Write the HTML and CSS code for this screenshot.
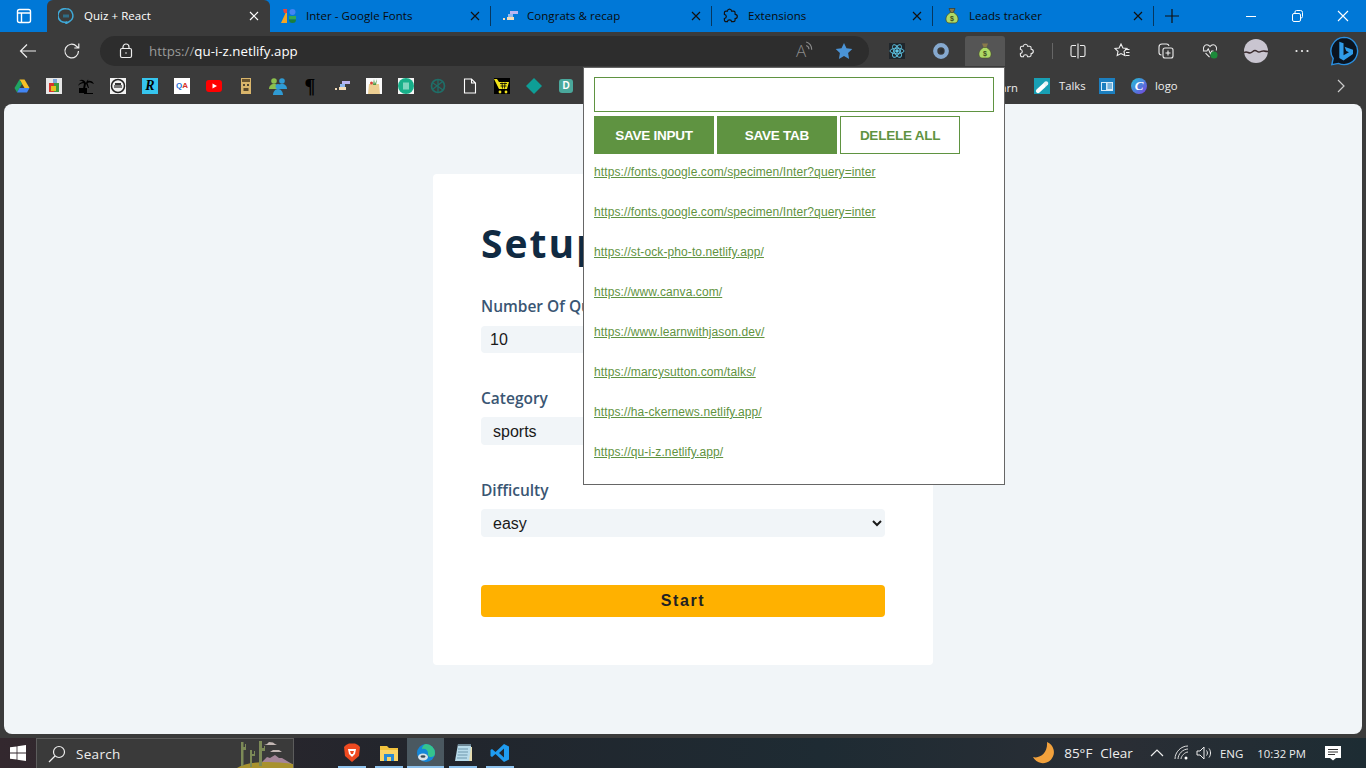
FILE: index.html
```html
<!DOCTYPE html>
<html lang="en">
<head>
<meta charset="utf-8">
<title>Quiz + React</title>
<link rel="stylesheet" href="styles.css">
</head>
<body>
<div class="tabbar">
  <div class="tab-lead">
    <svg class="ic18" viewBox="0 0 18 18" fill="none" stroke="#fff" stroke-width="1.4"><rect x="2.500" y="2.500" width="13" height="13" rx="2"/><path d="M2.500 6h13M6.500 6v9.500" /></svg>
  </div>
  <div class="tab tab-active">
    <svg class="ic16" viewBox="0 0 16 16" fill="none"><path d="M8 .8a6.800 6.800 0 0 1 3.400 12.700c-.8.600-1.800 1.400-3.200 1.900.5-.6.600-1 .5-1.400A6.800 6.800 0 1 1 8 .8z" stroke="#3fa9d8" stroke-width="1.500"/><path d="M5 6.500h6v3H5z" fill="#2f6c86"/></svg>
    <span class="tab-title">Quiz + React</span>
    <svg class="tab-x" viewBox="0 0 10 10" stroke="#fff" stroke-width="1.2"><path d="M1 1l8 8M9 1l-8 8"/></svg>
  </div>
  <div class="tab">
    <svg class="ic16" viewBox="0 0 16 16"><path d="M0 15L6 2v13z" fill="#f5a623"/><path d="M2 1h4v4H3z" fill="#e8453c"/><circle cx="11.500" cy="4" r="3" fill="#4285f4"/><rect x="8" y="8" width="7" height="3.500" fill="#34a853"/><path d="M8 11.500h7a3.500 3.500 0 0 1-7 0z" fill="#1b7f3b"/></svg>
    <span class="tab-title">Inter - Google Fonts</span>
    <svg class="tab-x" viewBox="0 0 10 10" stroke="#111" stroke-width="1.2"><path d="M1 1l8 8M9 1l-8 8"/></svg>
  </div>
  <div class="tab tab-sep">
    <svg class="ic16" viewBox="0 0 16 16"><rect x="8" y="3" width="8" height="3" fill="#b9b4f0"/><rect x="6" y="6" width="5" height="3" fill="#8fb8ee"/><rect x="5" y="9" width="7" height="3" fill="#f3dcb8"/><rect x="1" y="10" width="2" height="2" fill="#f3dcb8"/></svg>
    <span class="tab-title">Congrats &amp; recap</span>
    <svg class="tab-x" viewBox="0 0 10 10" stroke="#111" stroke-width="1.2"><path d="M1 1l8 8M9 1l-8 8"/></svg>
  </div>
  <div class="tab tab-sep">
    <svg class="ic16" viewBox="0 0 16 16" fill="none" stroke="#111" stroke-width="1.2"><path d="M6.500 1.200c1.200 0 2 .9 2.100 2h1.900c.9 0 1.600.7 1.600 1.600v1.500c1.200.1 2.200.9 2.200 2.100s-1 2-2.200 2.100v1.600c0 .9-.7 1.600-1.600 1.600H8.600c-.1-1.100-1-1.900-2.100-1.900s-2 .8-2.100 1.900H3c-.9 0-1.600-.7-1.600-1.600v-1.600c1.100-.3 1.900-1.100 1.900-2.100s-.8-1.800-1.900-2.100V4.800c0-.9.700-1.600 1.600-1.600h1.400c.1-1.100.9-2 2.100-2z"/></svg>
    <span class="tab-title">Extensions</span>
    <svg class="tab-x" viewBox="0 0 10 10" stroke="#111" stroke-width="1.2"><path d="M1 1l8 8M9 1l-8 8"/></svg>
  </div>
  <div class="tab tab-sep">
    <svg class="ic16" viewBox="0 0 16 16"><path d="M5 .5h6L9.300 4.500H6.700z" fill="#8a7a4a" stroke="#3c3a20" stroke-width=".7"/><path d="M6.500 4.500h3c3 1.500 5 4.500 4.500 7.500-.3 1.700-1.500 3-3 3H5c-1.500 0-2.700-1.300-3-3-.5-3 1.500-6 4.500-7.500z" fill="#aedb66" stroke="#4a5228" stroke-width=".8"/><text class="bag-sign" x="8" y="12.500">$</text></svg>
    <span class="tab-title">Leads tracker</span>
    <svg class="tab-x" viewBox="0 0 10 10" stroke="#111" stroke-width="1.2"><path d="M1 1l8 8M9 1l-8 8"/></svg>
  </div>
  <div class="tab-new tab-sep">
    <svg class="ic16" viewBox="0 0 16 16" stroke="#111" stroke-width="1.200"><path d="M8 1v14M1 8h14"/></svg>
  </div>
  <div class="win-controls">
    <svg class="win-btn" viewBox="0 0 46 32" stroke="#fff" stroke-width="1" fill="none"><path d="M18 16.500h10"/></svg>
    <svg class="win-btn" viewBox="0 0 46 32" stroke="#fff" stroke-width="1" fill="none"><rect x="18.500" y="13.500" width="8" height="8" rx="1.500"/><path d="M21 13v-1a1.500 1.500 0 0 1 1.500-1.500h4a2 2 0 0 1 2 2v4a1.500 1.500 0 0 1-1.500 1.500"/></svg>
    <svg class="win-btn" viewBox="0 0 46 32" stroke="#fff" stroke-width="1.100" fill="none"><path d="M18 11l10 10M28 11L18 21"/></svg>
  </div>
</div>

<div class="toolbar">
  <div class="tb-btn"><svg class="ic18" viewBox="0 0 18 18" fill="none" stroke="#eee" stroke-width="1.200"><path d="M17 9H1.500M8 2.500L1.500 9 8 15.500"/></svg></div>
  <div class="tb-btn"><svg class="ic18" viewBox="0 0 18 18" fill="none" stroke="#eee" stroke-width="1.200"><path d="M15.500 9a6.800 6.800 0 1 1-2-4.800L15.500 6M15.800 1.500V6h-4.500"/></svg></div>
  <div class="address">
    <svg class="lock" viewBox="0 0 14 16" fill="none" stroke="#eee" stroke-width="1.200"><rect x="1.500" y="5.500" width="11" height="9" rx="1.500"/><path d="M4 5.500V4a3 3 0 0 1 6 0v1.500"/><circle cx="7" cy="10" r=".8" fill="#eee" stroke="none"/></svg>
    <span class="url"><span class="url-dim">https://</span>qu-i-z.netlify.app</span>
    <span class="read-aloud">A<svg class="wave" viewBox="0 0 8 10" fill="none" stroke="#8a8a8a" stroke-width="1"><path d="M1 1c3 1 5 3 5 7M1 4c1.500.5 2.500 1.500 2.500 3.500"/></svg></span>
    <svg class="star" viewBox="0 0 18 18" fill="#4a93d6"><path d="M9 1l2.500 5.300 5.800.8-4.200 4 1 5.800L9 14.100l-5.100 2.800 1-5.800-4.200-4 5.800-.8z"/></svg>
  </div>
  <div class="tb-btn tb-first"><svg class="ic16" viewBox="0 0 16 16" fill="none" stroke="#5fc7e8" stroke-width=".9"><rect width="16" height="16" fill="#20262b" stroke="none"/><ellipse cx="8" cy="8" rx="7" ry="2.800"/><ellipse cx="8" cy="8" rx="7" ry="2.800" transform="rotate(60 8 8)"/><ellipse cx="8" cy="8" rx="7" ry="2.800" transform="rotate(120 8 8)"/><circle cx="8" cy="8" r="1.300" fill="#5fc7e8"/></svg></div>
  <div class="tb-btn"><svg class="ic16" viewBox="0 0 16 16" fill="none"><ellipse cx="8" cy="8" rx="5.800" ry="5.800" stroke="#86a9cf" stroke-width="4.200"/><ellipse cx="8.800" cy="8" rx="1.800" ry="2.600" fill="#2c3136"/></svg></div>
  <div class="tb-btn tb-active"><svg class="ic16" viewBox="0 0 16 16"><path d="M5 .5h6L9.300 4.500H6.700z" fill="#8a7a4a"/><path d="M6.500 4.500h3c3 1.500 5 4.500 4.500 7.500-.3 1.700-1.500 3-3 3H5c-1.500 0-2.700-1.300-3-3-.5-3 1.500-6 4.500-7.500z" fill="#aedb66" stroke="#4a5228" stroke-width=".6"/><text class="bag-sign" x="8" y="12.500">$</text></svg></div>
  <div class="tb-btn"><svg class="ic16" viewBox="0 0 16 16" fill="none" stroke="#eee" stroke-width="1.100"><path d="M6.500 1.200c1.200 0 2 .9 2.100 2h1.900c.9 0 1.600.7 1.600 1.600v1.500c1.200.1 2.200.9 2.200 2.100s-1 2-2.200 2.100v1.600c0 .9-.7 1.600-1.600 1.600H8.600c-.1-1.100-1-1.900-2.100-1.900s-2 .8-2.100 1.900H3c-.9 0-1.600-.7-1.600-1.600v-1.600c1.100-.3 1.900-1.100 1.900-2.100s-.8-1.800-1.900-2.100V4.800c0-.9.700-1.600 1.600-1.600h1.400c.1-1.100.9-2 2.100-2z"/></svg></div>
  <div class="tb-divider"></div>
  <div class="tb-btn"><svg class="ic16" viewBox="0 0 16 16" fill="none" stroke="#eee" stroke-width="1.100"><path d="M6 2.500H2.500a1.500 1.500 0 0 0-1.500 1.500v8a1.500 1.500 0 0 0 1.500 1.500H6M10 2.500h3.500A1.500 1.500 0 0 1 15 4v8a1.500 1.500 0 0 1-1.500 1.500H10M8 0.500v15"/></svg></div>
  <div class="tb-btn"><svg class="ic16" viewBox="0 0 16 16" fill="none" stroke="#eee" stroke-width="1.100"><path d="M7 1l1.900 4 4.100.5-3 2.900.8 4.100L7 10.500l-3.800 2 .8-4.100-3-2.900L5.100 5z"/><path d="M11 6.500h4.500M12 9.500h3.500M11.500 12.500h4"/></svg></div>
  <div class="tb-btn"><svg class="ic16" viewBox="0 0 16 16" fill="none" stroke="#eee" stroke-width="1.100"><rect x="5" y="5" width="10" height="10" rx="2"/><path d="M10 7.500v5M7.500 10h5M3.500 12A2.500 2.500 0 0 1 1 9.500V4a3 3 0 0 1 3-3h4.500A2.500 2.500 0 0 1 11 3"/></svg></div>
  <div class="tb-btn"><svg class="ic16" viewBox="0 0 18 18" fill="none" stroke="#eee" stroke-width="1.200"><path d="M2 8.500C.5 5 3 2 5.500 2 7 2 8.300 3 9 4c.7-1 2-2 3.500-2C15 2 17.500 5 16 8.500M1 9h4.500L7 6.500 9.500 12l1.500-3h2M4 11.500l4.500 4.500"/><circle cx="13.500" cy="13.500" r="4" fill="#1c8a3a" stroke="none"/></svg></div>
  <svg class="avatar" viewBox="0 0 24 24"><circle cx="12" cy="12" r="12" fill="#c9c5d0"/><path d="M0 13.500c3-1.500 4 .5 6 .5s3-2.500 5-2.500 2 1.500 4 1.500 3-1.500 5-1 2 .5 4 .5" fill="none" stroke="#3a2b2e" stroke-width="1.500"/></svg>
  <div class="tb-btn"><svg class="ic16" viewBox="0 0 16 16" fill="#eee"><circle cx="2.500" cy="8" r="1.100"/><circle cx="8" cy="8" r="1.100"/><circle cx="13.500" cy="8" r="1.100"/></svg></div>
  <svg class="bing" viewBox="0 0 32 32"><path d="M16 1.500a14.500 14.500 0 1 1-6 27.700L3 30.500l1.500-6.500A14.500 14.500 0 0 1 16 1.500z" fill="#0a1420" stroke="#2a8fe0" stroke-width="1.500"/><path d="M11 6l4.500 1.600v13l5.800-3.300-2.900-1.300-1.800-4.500 9 3.200v4.600L15.500 26 11 23.500z" fill="#2f9be8"/></svg>
</div>

<div class="bookmarks">
  <div class="bm"><svg class="ic16" viewBox="0 0 16 16"><path d="M5.500 1.500h5L15.500 10h-5z" fill="#f6bf26"/><path d="M5.500 1.500L.5 10l2.500 4.500L8 6z" fill="#1fa463"/><path d="M3 14.500h10l2.500-4.500H5.500z" fill="#4285f4"/></svg></div>
  <div class="bm"><svg class="ic16" viewBox="0 0 16 16"><rect width="16" height="16" fill="#e6e6e6"/><rect x="3" y="5" width="5" height="9" fill="#d9342b"/><rect x="8" y="5" width="5" height="9" fill="#3d9b3d"/><rect x="5" y="8" width="5" height="5" fill="#e4c21e"/><rect x="7" y="1" width="4" height="4" fill="#7ea6d9"/></svg></div>
  <div class="bm"><svg class="ic16" viewBox="0 0 16 16" fill="#000"><path d="M8 5C6 1 3 1 1 3c2-.5 3 0 4 1C3 4 1 5 0 8c2-2 4-3 6-2.500L5 11h2l1-5.500L10 10h1L9.500 5C11 4 13 4.500 16 6c-1-3-4-4-6.500-3C11 1.500 10 0 8 5z"/><rect x="1" y="10" width="8" height="5"/><path d="M6 15h9v1H6z"/></svg></div>
  <div class="bm"><svg class="ic16" viewBox="0 0 16 16" fill="none"><rect width="16" height="16" fill="#f2f2f2"/><circle cx="8" cy="8" r="6.500" stroke="#222" stroke-width="1.500"/><path d="M4 7h8v3H4z" fill="#777"/><path d="M5 5h6v2H5z" fill="#333"/></svg></div>
  <div class="bm"><span class="bm-r">R</span></div>
  <div class="bm"><span class="bm-qa"><span class="bm-q">Q</span><span class="bm-a">A</span></span></div>
  <div class="bm"><svg class="ic16" viewBox="0 0 16 16"><rect y="2" width="16" height="12" rx="3" fill="#f00"/><path d="M6.500 5.500L11 8l-4.500 2.500z" fill="#fff"/></svg></div>
  <div class="bm"><svg class="ic16" viewBox="0 0 16 16"><path d="M3 0h10v16H3z" fill="#d9b56b"/><path d="M4 1h8v3H4z" fill="#6b5530"/><circle cx="6" cy="7" r="1" fill="#222"/><circle cx="10" cy="7" r="1" fill="#222"/><path d="M5.500 10h5v3h-5z" fill="#5b4a2c"/></svg></div>
  <div class="bm"><svg class="ic18" viewBox="0 0 18 18"><circle cx="5" cy="4" r="2.800" fill="#8bbf4d"/><circle cx="13" cy="4" r="2.800" fill="#2f9bd4"/><path d="M0 12c0-3 2-5 5-5s5 2 5 5z" fill="#8bbf4d"/><path d="M8 12c0-3 2-5 5-5s5 2 5 5z" fill="#2f9bd4"/><circle cx="9" cy="9.500" r="2.500" fill="#2f9bd4"/><path d="M4 18c0-3 2-6 5-6s5 3 5 6z" fill="#2f9bd4"/></svg></div>
  <div class="bm"><span class="bm-pilcrow">¶</span></div>
  <div class="bm"><svg class="ic16" viewBox="0 0 16 16"><rect x="8" y="3" width="8" height="3" fill="#b9b4f0"/><rect x="6" y="6" width="5" height="3" fill="#8fb8ee"/><rect x="5" y="9" width="7" height="3" fill="#f3dcb8"/><rect x="1" y="10" width="2" height="2" fill="#f3dcb8"/></svg></div>
  <div class="bm"><svg class="ic16" viewBox="0 0 16 16"><rect width="16" height="16" fill="#fafafa"/><path d="M3 6h10l1 10H2z" fill="#edcf93"/><path d="M8 1l1 6H7zM11 1L10 7H8.500z" fill="#4d9a44"/><circle cx="5.500" cy="5" r="1.500" fill="#d6463a"/></svg></div>
  <div class="bm"><svg class="ic16" viewBox="0 0 16 16"><rect width="16" height="16" fill="#f5f5f5"/><circle cx="8" cy="8" r="8" fill="#18b08a"/><rect x="5" y="4.500" width="6" height="7" fill="#7fd6bf"/></svg></div>
  <div class="bm"><svg class="ic16" viewBox="0 0 16 16" fill="none" stroke="#1f6e68" stroke-width="1.700"><circle cx="8" cy="8" r="6.500"/><path d="M3 5l10 7M3 11l9-7M8 2v12" stroke-width="1.300"/></svg></div>
  <div class="bm"><svg class="ic16" viewBox="0 0 14 16" fill="none" stroke="#fff" stroke-width="1.100"><path d="M1.500 1h7l4 4v10h-11zM8.500 1v4h4"/></svg></div>
  <div class="bm"><svg class="ic16" viewBox="0 0 16 16"><rect width="16" height="16" fill="#000"/><path d="M0 1h3l2 3h10l-2 7H5z" fill="#f0e21a"/><path d="M6 5.500h7M6.500 8h6M8 4.500l.5 6M11 4.500l-.5 6" stroke="#000" stroke-width=".8"/><circle cx="6" cy="14" r="1.400" fill="#f0e21a"/><circle cx="12" cy="14" r="1.400" fill="#f0e21a"/></svg></div>
  <div class="bm"><svg class="ic16" viewBox="0 0 16 16"><path d="M8 0l8 8-8 8-8-8z" fill="#0e9e96"/></svg></div>
  <div class="bm"><span class="bm-d">D</span></div>
  <div class="bm-hidden"><span class="bm-label">Learn</span></div>
  <div class="bm-talks"><svg class="ic16" viewBox="0 0 16 16"><rect width="16" height="16" fill="#189fb4"/><path d="M2.500 11.500l6-5.500a2 2 0 0 1 3 3l-6 5.500a2 2 0 0 1-3-3z" fill="#fff"/><path d="M9 5.500l2-2a2.200 2.200 0 0 1 3 3l-2 2z" fill="#e8f4f6"/></svg><span class="bm-label">Talks</span></div>
  <div class="bm"><svg class="ic16" viewBox="0 0 16 16"><rect width="16" height="16" fill="#1c7fbf"/><rect x="2" y="4" width="12" height="9" fill="#d7ebf7"/><rect x="3" y="5" width="4" height="7" fill="#1c7fbf"/><path d="M8.500 6H13M8.500 8H13M8.500 10H13" stroke="#1c7fbf" stroke-width="1"/></svg></div>
  <div class="bm-logo"><span class="canva">C</span><span class="bm-label">logo</span></div>
  <svg class="bm-more" viewBox="0 0 10 14" fill="none" stroke="#ccc" stroke-width="1.200"><path d="M2 1l6 6-6 6"/></svg>
</div>

<div class="stage">
  <main class="card">
    <h1 class="card-title">Setup Quiz</h1>
    <div class="field">
      <label class="field-label">Number Of Questions</label>
      <input class="field-input" type="number" value="10">
    </div>
    <div class="field">
      <label class="field-label">Category</label>
      <select class="field-select"><option>sports</option></select>
    </div>
    <div class="field">
      <label class="field-label">Difficulty</label>
      <select class="field-select"><option>easy</option></select>
    </div>
    <button class="start-btn">Start</button>
  </main>
</div>

<div class="taskbar">
  <svg class="win-logo" viewBox="0 0 16 16" fill="#fff"><path d="M0 2.300L6.600 1.400V7.600H0zM7.400 1.300L16 0V7.600H7.400zM0 8.400H6.600V14.600L0 13.700zM7.400 8.400H16V16L7.400 14.700z"/></svg>
  <div class="search">
    <svg class="search-ic" viewBox="0 0 18 18" fill="none" stroke="#eee" stroke-width="1.200"><circle cx="11" cy="7" r="5.500"/><path d="M7 11l-6 6"/></svg>
    <span class="search-text">Search</span>
    <svg class="search-art" viewBox="0 0 56 29"><path d="M27 6l3-1 2-2 4 .5 2 1.500 2 1zM33 13l3-2h6l3 2z" fill="#c3b7b4"/><path d="M22 26l8-8 3 1 5-3 4 3 3 0 10 6v3z" fill="#a58698"/><path d="M0 29c10-6 30-8 56-4v4z" fill="#a8922e"/><path d="M4 27V3h2.500v5H8V5h1v6H6.500v16zM13 28V11h2v4h2v-3h1v5h-3v11zM22 27V2h3v7h2V7h1v5h-3v15z" fill="#7c8a57"/></svg>
  </div>
  <div class="task-apps">
    <div class="app"><svg class="ic20" viewBox="0 0 20 20"><path d="M4 2l3-1.500h6L16 2l2 2-1 9-7 6-7-6-1-9z" fill="#ee4a20"/><path d="M6 6h8l-1 5-3 3-3-3z" fill="#fff"/><path d="M8 8h4l-1 3H9z" fill="#ee4a20"/></svg></div>
    <div class="app"><svg class="ic20" viewBox="0 0 20 20"><path d="M1 3h7l2 2h9v13H1z" fill="#f3c33d"/><path d="M1 7h18v11H1z" fill="#fad466"/><path d="M5 11h10v7h-3v-4H8v4H5z" fill="#2a8ad4"/></svg></div>
    <div class="app app-active"><svg class="ic20" viewBox="0 0 20 20"><circle cx="10" cy="10" r="9" fill="#1487d8"/><path d="M10 1a9 9 0 0 1 9 9c0 3-2 4-4 4-3 0-3-2-3-4 0-3-3-5-6-4 0-2 2-5 4-5z" fill="#35c48d"/><ellipse cx="7" cy="14" rx="5" ry="3.500" fill="#d9e2e8"/><ellipse cx="7" cy="13.500" rx="2.500" ry="1.300" fill="#3b4a55"/></svg></div>
    <div class="app"><svg class="ic20" viewBox="0 0 20 20"><path d="M5 1h13v17H2z" fill="#b9dceb"/><path d="M5 1h13v2H5z" fill="#6c8593"/><path d="M5 6h10M5 9h10M4.500 12h10M4 15h10" stroke="#6f98ad" stroke-width="1"/><path d="M16 18h3V4h-1z" fill="#e6dcb0"/></svg></div>
    <div class="app"><svg class="ic20" viewBox="0 0 20 20"><path d="M14 1l5 2.500v13L14 19 5.500 11 2 14 .5 13V7L2 6l3.500 3zM14 5.500L9 10l5 4.500z" fill="#1f9cf0"/></svg></div>
  </div>
  <div class="tray">
    <svg class="moon" viewBox="0 0 24 24"><path d="M15 1a11 11 0 1 1-14 15c7 2 15-4 14-15z" fill="#f2a13c"/></svg>
    <span class="tray-text temp">85°F</span>
    <span class="tray-text clear">Clear</span>
    <svg class="tray-chev" viewBox="0 0 14 8" fill="none" stroke="#eee" stroke-width="1.200"><path d="M1 7l6-6 6 6"/></svg>
    <svg class="tray-wifi" viewBox="0 0 16 16" fill="none" stroke="#ddd" stroke-width="1"><path d="M1 14C1 7 7 1 14 1M4 14c0-5 5-10 10-10M7 14c0-3 4-7 7-7"/><circle cx="12" cy="13" r="1.500" fill="#fff" stroke="none"/></svg>
    <svg class="tray-vol" viewBox="0 0 16 16" fill="none" stroke="#eee" stroke-width="1"><path d="M1 6h3l4-4v12l-4-4H1zM10.500 5.500c1.200 1.500 1.200 3.500 0 5M13 3.500c2 2.500 2 6.500 0 9"/></svg>
    <span class="tray-text eng">ENG</span>
    <span class="tray-text time">10:32 PM</span>
    <svg class="tray-note" viewBox="0 0 16 16"><path d="M0 1h16v12h-5l-3 2.500L5 13H0z" fill="#fff"/><path d="M3 4.500h10M3 7h10M3 9.500h7" stroke="#333" stroke-width="1"/></svg>
  </div>
</div>

<aside class="popup">
  <input class="popup-input" type="text">
  <div class="popup-actions">
    <button class="popup-btn popup-btn-fill">SAVE INPUT</button>
    <button class="popup-btn popup-btn-fill">SAVE TAB</button>
    <button class="popup-btn">DELELE ALL</button>
  </div>
  <ul class="lead-list">
    <li><a class="lead-link" href="#">https://fonts.google.com/specimen/Inter?query=inter</a></li>
    <li><a class="lead-link" href="#">https://fonts.google.com/specimen/Inter?query=inter</a></li>
    <li><a class="lead-link" href="#">https://st-ock-pho-to.netlify.app/</a></li>
    <li><a class="lead-link" href="#">https://www.canva.com/</a></li>
    <li><a class="lead-link" href="#">https://www.learnwithjason.dev/</a></li>
    <li><a class="lead-link" href="#">https://marcysutton.com/talks/</a></li>
    <li><a class="lead-link" href="#">https://ha-ckernews.netlify.app/</a></li>
    <li><a class="lead-link" href="#">https://qu-i-z.netlify.app/</a></li>
  </ul>
</aside>
</body>
</html>
```

FILE: styles.css
```css
* { box-sizing: border-box; }
html, body { margin: 0; padding: 0; }
body {
  position: relative;
  width: 1366px;
  height: 768px;
  overflow: hidden;
  background: #3b3b3b;
  display: flex;
  flex-direction: column;
  font-family: "Open Sans", "Noto Sans", sans-serif;
}
svg { display: block; flex: none; }
.ic16 { width: 16px; height: 16px; }
.ic18 { width: 18px; height: 18px; }
.ic20 { width: 20px; height: 20px; }
.bag-sign {
  font: 700 7px "Liberation Sans", sans-serif;
  fill: #3f4f1f;
  text-anchor: middle;
}

/* tab strip */
.tabbar {
  height: 32px;
  flex: none;
  background: #0078d7;
  display: flex;
  align-items: stretch;
}
.tab-lead { width: 47px; display: flex; align-items: center; justify-content: center; }
.tab {
  position: relative;
  width: 221px;
  padding: 0 11px;
  display: flex;
  align-items: center;
  gap: 9px;
  color: #0a0a0a;
}
.tab-active {
  width: 223px;
  background: #3b3b3b;
  border-radius: 6px 6px 0 0;
  color: #fff;
  gap: 10px;
}
.tab-sep::before {
  content: "";
  position: absolute;
  left: -1px;
  top: 6px;
  height: 20px;
  width: 1px;
  background: #06375f;
}
.tab-title {
  flex: 1;
  padding-bottom: 2px;
  font-size: 11.500px;
  letter-spacing: .05px;
  white-space: nowrap;
}
.tab-x { width: 10px; height: 10px; flex: none; }
.tab-new { position: relative; width: 36px; display: flex; align-items: center; justify-content: center; }
.win-controls { margin-left: auto; display: flex; }
.win-btn { width: 46px; height: 32px; }

/* toolbar */
.toolbar {
  height: 36px;
  flex: none;
  display: flex;
  align-items: flex-start;
  padding: 4px 0 0 6px;
  background: #3b3b3b;
}
.tb-btn { width: 44px; height: 30px; display: flex; align-items: center; justify-content: center; }
.tb-first { margin-left: 6px; }
.tb-active { width: 40px; margin-left: 2px; background: #555; border-radius: 3px 3px 0 0; }
.tb-divider { width: 1px; height: 16px; margin: 7px 3px 0 3px; background: #666; }
.address {
  width: 769px;
  height: 30px;
  margin-left: 6px;
  padding: 0 16px 0 19px;
  background: #2d2d2d;
  border-radius: 15px;
  display: flex;
  align-items: center;
}
.lock { width: 14px; height: 16px; }
.url { margin-left: 16px; font-size: 13.300px; color: #fff; flex: 1; white-space: nowrap; }
.url-dim { color: #9a9a9a; }
.read-aloud {
  position: relative;
  width: 16px;
  color: #8a8a8a;
  font-size: 17px;
  font-weight: 300;
  line-height: 18px;
  margin-right: 23px;
}
.wave { position: absolute; left: 9px; top: -1px; width: 9px; height: 11px; }
.star { width: 18px; height: 18px; }
.avatar { width: 24px; height: 24px; margin: 3px 12px 0 12px; }
.bing { width: 30px; height: 30px; margin-left: 5px; }

/* bookmarks */
.bookmarks {
  height: 36px;
  flex: none;
  display: flex;
  align-items: center;
  padding: 0 0 0 6px;
  color: #eee;
}
.bm { width: 32px; height: 36px; display: flex; align-items: center; justify-content: center; }
.bm-r {
  width: 16px; height: 16px;
  background: #36c5ee;
  color: #000;
  font: italic 700 14px/16px "Liberation Serif", serif;
  text-align: center;
}
.bm-qa {
  width: 16px; height: 16px;
  background: #fff;
  display: flex;
  align-items: center;
  justify-content: center;
  font: 700 8px/16px "Liberation Sans", sans-serif;
}
.bm-q { color: #1d6fd8; }
.bm-a { color: #d8322a; }
.bm-pilcrow { color: #000; font: 700 20px/18px "Liberation Serif", serif; }
.bm-d {
  width: 14px; height: 14px;
  background: #4aa89c;
  border-radius: 3px;
  color: #fff;
  font: 700 10px/14px "Liberation Sans", sans-serif;
  text-align: center;
}
.bm-label { padding-bottom: 2px; font-size: 11.300px; color: #eee; white-space: nowrap; }
.bm-hidden { width: 436px; text-align: right; }
.bm-talks { display: flex; align-items: center; gap: 9px; margin-left: 16px; width: 57px; }
.bm-logo { display: flex; align-items: center; gap: 8px; margin-left: 8px; }
.canva {
  width: 16px; height: 16px;
  border-radius: 50%;
  background: linear-gradient(135deg, #1fc4d8, #7a3fe0);
  color: #fff;
  font: italic 700 13px/16px "Liberation Serif", serif;
  text-align: center;
}
.bm-more { width: 10px; height: 14px; margin-left: auto; margin-right: 20px; }

/* page */
.stage {
  height: 630px;
  flex: none;
  margin: 0 4px;
  padding-top: 70px;
  background: #f1f5f8;
  border-radius: 8px;
  display: flex;
  justify-content: center;
  align-items: flex-start;
}
.card {
  width: 500px;
  height: 491px;
  padding: 48px;
  background: #fff;
  border-radius: 4px;
}
.card-title {
  margin: 0 0 26px;
  height: 48px;
  font-size: 39px;
  line-height: 42px;
  font-weight: 700;
  letter-spacing: 2px;
  color: #102a42;
  white-space: nowrap;
}
.field { margin-bottom: 35px; }
.field-label {
  display: block;
  height: 22px;
  margin-bottom: 7px;
  font-size: 15.500px;
  line-height: 20px;
  font-weight: 600;
  color: #3a5673;
}
.field-input, .field-select {
  display: block;
  width: 100%;
  border: none;
  background: #f1f5f8;
  border-radius: 4px;
  font: 16px "Liberation Sans", Arial, sans-serif;
  color: #1a1a1a;
}
.field-input { height: 27px; margin-top: 8px; padding: 0 9px; }
.field-select { height: 28px; padding: 0 8px; }
.start-btn {
  display: block;
  width: 100%;
  height: 32px;
  margin-top: 48px;
  border: none;
  border-radius: 4px;
  background: #ffb100;
  color: #222;
  font: 700 16px "Liberation Sans", Arial, sans-serif;
  letter-spacing: 1.600px;
}

/* taskbar */
.taskbar {
  height: 30px;
  margin-top: 4px;
  flex: none;
  background: linear-gradient(90deg, #33282e 0%, #22252c 30%, #1e2b33 60%, #2a2e35 82%, #1d2c33 100%);
  display: flex;
  align-items: center;
}
.win-logo { width: 16px; height: 16px; margin-left: 10px; }
.search {
  width: 258px;
  height: 30px;
  margin-left: 10px;
  padding-left: 11px;
  background: #3a3a3a;
  border: 1px solid #5c5c5c;
  border-bottom: none;
  display: flex;
  align-items: center;
  overflow: hidden;
}
.search-ic { width: 18px; height: 18px; }
.search-text { margin-left: 10px; font-size: 13.500px; letter-spacing: .3px; color: #eee; }
.search-art { width: 56px; height: 29px; margin-left: auto; }
.task-apps { display: flex; margin-left: 39px; }
.app {
  position: relative;
  width: 37px;
  height: 30px;
  display: flex;
  align-items: center;
  justify-content: center;
}
.app::after {
  content: "";
  position: absolute;
  left: 5px;
  right: 4px;
  bottom: 0;
  height: 2px;
  background: #8fc3ee;
}
.app-active { background: #4a5860; }
.app-active::after { left: 0; right: 0; }
.tray { margin-left: auto; display: flex; align-items: center; height: 30px; color: #eee; }
.moon { width: 24px; height: 24px; }
.tray-text { white-space: nowrap; }
.temp { margin-left: 8px; font-size: 13.500px; }
.clear { margin-left: 8px; font-size: 13.500px; }
.tray-chev { width: 14px; height: 8px; margin-left: 17px; }
.tray-wifi { width: 16px; height: 16px; margin-left: 10px; }
.tray-vol { width: 16px; height: 16px; margin-left: 6px; }
.eng { margin-left: 8px; font-size: 11.500px; }
.time { margin-left: 14px; font-size: 11.300px; }
.tray-note { width: 16px; height: 16px; margin: 0 25px 0 19px; }

/* extension popup: floats over the page */
.popup {
  position: absolute;
  left: 583px;
  top: 67px;
  width: 422px;
  height: 418px;
  padding: 9px 10px;
  background: #fff;
  border: 1px solid #666;
  font-family: "Liberation Sans", Arial, sans-serif;
}
.popup-input {
  display: block;
  width: 400px;
  height: 35px;
  padding: 0 8px;
  border: 1px solid #5f9341;
  background: #fff;
  outline: none;
}
.popup-actions { display: flex; gap: 3px; margin-top: 4px; }
.popup-btn {
  width: 120px;
  height: 38px;
  padding: 0;
  border: 1px solid #5f9341;
  background: #fff;
  color: #5f9341;
  font: 700 13.500px "Liberation Sans", Arial, sans-serif;
  letter-spacing: -.25px;
}
.popup-btn-fill { background: #5f9341; color: #fff; }
.lead-list { list-style: none; margin: 10px 0 0; padding: 0; }
.lead-list li { height: 40px; font-size: 12px; line-height: 16px; letter-spacing: .1px; }
.lead-link { color: #5f9341; text-decoration: underline; }
```
